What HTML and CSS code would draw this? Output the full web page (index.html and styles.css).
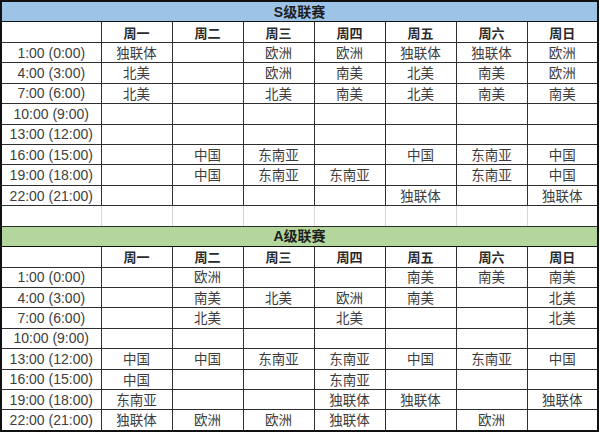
FILE: index.html
```html
<!DOCTYPE html>
<html lang="zh-CN">
<head>
<meta charset="utf-8">
<title>联赛赛程</title>
<link rel="stylesheet" href="styles.css">
</head>
<body>
<table class="sched">
  <colgroup>
    <col class="c-time">
    <col><col><col><col><col><col><col>
  </colgroup>
  <tbody>
    <tr class="title title-s"><td colspan="8">S级联赛</td></tr>
    <tr class="head"><td></td><td>周一</td><td>周二</td><td>周三</td><td>周四</td><td>周五</td><td>周六</td><td>周日</td></tr>
    <tr><td class="t">1:00 (0:00)</td><td>独联体</td><td></td><td>欧洲</td><td>欧洲</td><td>独联体</td><td>独联体</td><td>欧洲</td></tr>
    <tr><td class="t">4:00 (3:00)</td><td>北美</td><td></td><td>欧洲</td><td>南美</td><td>北美</td><td>南美</td><td>欧洲</td></tr>
    <tr><td class="t">7:00 (6:00)</td><td>北美</td><td></td><td>北美</td><td>南美</td><td>北美</td><td>南美</td><td>南美</td></tr>
    <tr><td class="t">10:00 (9:00)</td><td></td><td></td><td></td><td></td><td></td><td></td><td></td></tr>
    <tr><td class="t">13:00 (12:00)</td><td></td><td></td><td></td><td></td><td></td><td></td><td></td></tr>
    <tr><td class="t">16:00 (15:00)</td><td></td><td>中国</td><td>东南亚</td><td></td><td>中国</td><td>东南亚</td><td>中国</td></tr>
    <tr><td class="t">19:00 (18:00)</td><td></td><td>中国</td><td>东南亚</td><td>东南亚</td><td></td><td>东南亚</td><td>中国</td></tr>
    <tr><td class="t">22:00 (21:00)</td><td></td><td></td><td></td><td></td><td>独联体</td><td></td><td>独联体</td></tr>
    <tr class="gap"><td></td><td></td><td></td><td></td><td></td><td></td><td></td><td></td></tr>
    <tr class="title title-a"><td colspan="8">A级联赛</td></tr>
    <tr class="head"><td></td><td>周一</td><td>周二</td><td>周三</td><td>周四</td><td>周五</td><td>周六</td><td>周日</td></tr>
    <tr><td class="t">1:00 (0:00)</td><td></td><td>欧洲</td><td></td><td></td><td>南美</td><td>南美</td><td>南美</td></tr>
    <tr><td class="t">4:00 (3:00)</td><td></td><td>南美</td><td>北美</td><td>欧洲</td><td>南美</td><td></td><td>北美</td></tr>
    <tr><td class="t">7:00 (6:00)</td><td></td><td>北美</td><td></td><td>北美</td><td></td><td></td><td>北美</td></tr>
    <tr><td class="t">10:00 (9:00)</td><td></td><td></td><td></td><td></td><td></td><td></td><td></td></tr>
    <tr><td class="t">13:00 (12:00)</td><td>中国</td><td>中国</td><td>东南亚</td><td>东南亚</td><td>中国</td><td>东南亚</td><td>中国</td></tr>
    <tr><td class="t">16:00 (15:00)</td><td>中国</td><td></td><td></td><td>东南亚</td><td></td><td></td><td></td></tr>
    <tr><td class="t">19:00 (18:00)</td><td>东南亚</td><td></td><td></td><td>独联体</td><td>独联体</td><td></td><td>独联体</td></tr>
    <tr><td class="t">22:00 (21:00)</td><td>独联体</td><td>欧洲</td><td>欧洲</td><td>独联体</td><td></td><td>欧洲</td><td></td></tr>
  </tbody>
</table>
</body>
</html>
```

FILE: styles.css
```css
html, body {
  margin: 0;
  padding: 0;
  background: #ffffff;
}

.sched {
  border-collapse: collapse;
  table-layout: fixed;
  width: 599px;
  height: 432px;
  border: 2px solid #111;
  font-family: "Noto Sans CJK SC", "Liberation Sans", sans-serif;
  font-size: 13.5px;
  color: #3c3c3c;
}

.c-time {
  width: 100px;
}

.sched td {
  border: 1px solid #2e2e2e;
  padding: 0;
  height: 19px;
  line-height: 1;
  text-align: center;
  vertical-align: middle;
  white-space: nowrap;
  overflow: hidden;
}

.sched td.t {
  font-family: "Liberation Sans", Arial, sans-serif;
  font-size: 14px;
  color: #404040;
}

.head td {
  font-weight: bold;
  font-size: 13px;
  color: #2a2a2a;
}

.title td {
  font-family: "Liberation Sans", "Noto Sans CJK SC", sans-serif;
  font-weight: bold;
  font-size: 14px;
  color: #1e1e1e;
  border-top: 1px solid #111;
  border-bottom: 1px solid #111;
}

.title-s td {
  background: #9dc3e6;
}

.title-a td {
  background: #b3d69c;
}

.gap td {
  border-left: 1px solid #d6d6d6;
  border-right: 1px solid #d6d6d6;
  border-top: 1px solid #2e2e2e;
  border-bottom: 1px solid #2e2e2e;
}
```
